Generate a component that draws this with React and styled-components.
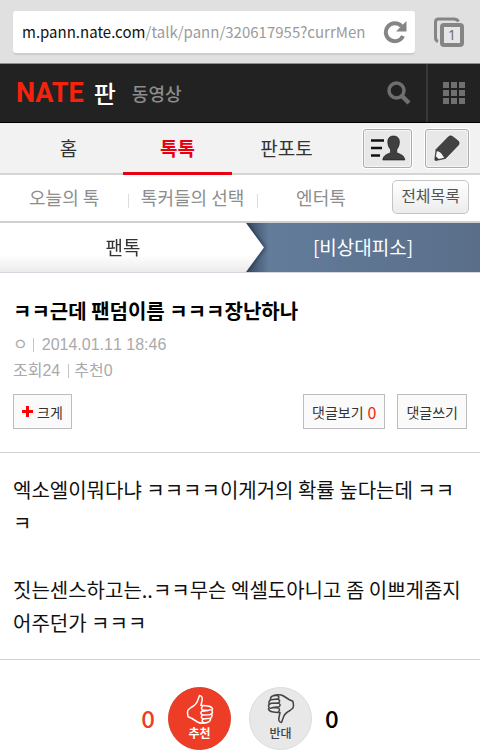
import styled, { createGlobalStyle, css } from "styled-components"

const GlobalStyle = createGlobalStyle`
  * {
    box-sizing: border-box;
  }

  body {
    margin: 0;
    background: #fff;
    color: #111;
    font-family: "Noto Sans CJK KR", sans-serif;
    overflow-x: hidden;
  }

  a {
    color: inherit;
    text-decoration: none;
  }

  button {
    font-family: inherit;
    cursor: pointer;
  }

  svg {
    display: block;
  }
`;

const IconButton = styled.button`
  display: flex;
  flex: none;
  padding: 0;
  border: none;
  background: none;
`;

const BrowserBar = styled.div`
  display: flex;
  align-items: center;
  gap: 19px;
  height: 64px;
  padding: 0 16px 0 13px;
  background: #e0e0e0;
  border-bottom: 1px solid #8c8c8c;
`;

const AddressBox = styled.div`
  display: flex;
  flex: 1;
  align-items: center;
  gap: 8px;
  min-width: 0;
  height: 42px;
  padding: 0 8px 0 9px;
  background: #fff;
  border-radius: 3px;
  box-shadow: 0 2px 1px #cdcdcd;
`;

const Address = styled.label`
  display: grid;
  flex: 1;
  min-width: 0;
  overflow: hidden;
  font-size: 15px;
  line-height: 26px;
  color: #9b9b9b;

  & > * {
    grid-area: 1 / 1;
  }

  span {
    white-space: nowrap;
    pointer-events: none;
  }

  b {
    font-weight: 400;
    color: #111;
  }

  input {
    width: 100%;
    min-width: 0;
    padding: 0;
    border: none;
    outline: none;
    background: transparent;
    font: inherit;
    color: transparent;
    caret-color: #111;
  }
`;

const Header = styled.header`
  display: flex;
  align-items: stretch;
  height: 59px;
  background: #222;
  border-bottom: 1px solid #000;
`;

const Brand = styled.div`
  display: flex;
  flex: 1;
  align-items: center;
  gap: 10px;
  padding-left: 16px;
`;

const Logo = styled.a`
  font-family: Roboto, sans-serif;
  font-size: 27px;
  font-weight: 700;
  color: #f5230c;
`;

const Service = styled.a`
  font-size: 24px;
  font-weight: 500;
  line-height: 30px;
  color: #fff;
`;

const Section = styled.a`
  padding-left: 6px;
  font-size: 18px;
  font-weight: 500;
  color: #8c8c8c;
`;

const HeaderButton = styled(IconButton)`
  align-items: center;
  justify-content: center;
  width: 54px;
  color: #6f6f6f;
  border-left: ${({ $divided }) => ($divided ? "2px solid #383838" : "none")};
`;

const MainNav = styled.nav`
  display: flex;
  align-items: center;
  height: 52px;
  padding: 0 11px 0 14px;
  background: #f2f2f2;
  border-bottom: 2px solid #d5d5d5;
`;

const MainTab = styled.a`
  flex: 1;
  align-self: stretch;
  margin-bottom: -2px;
  border-bottom: 3px solid transparent;
  font-size: 19px;
  line-height: 50px;
  text-align: center;
  color: #333;

  ${({ $active }) => $active && css`
    border-color: #e60012;
    color: #e60012;
    font-weight: 700;
  `}
`;

const Tools = styled.div`
  display: flex;
  gap: 13px;
  padding-left: 22px;
`;

const ToolButton = styled(IconButton)`
  align-items: center;
  justify-content: center;
  width: ${({ $wide }) => ($wide ? "49px" : "44px")};
  height: 39px;
  background: #e8e8e8;
  border: 1px solid #ababab;
  border-radius: 3px;
  box-shadow: inset 0 0 0 1px #f6f6f6, 0 0 0 1px #fff;
`;

const SubNav = styled.nav`
  display: flex;
  align-items: center;
  height: 48px;
  padding-right: 11px;
  border-bottom: 2px solid #d0d0d0;
`;

const SubTab = styled.a`
  flex: 1;
  padding-bottom: 3px;
  font-size: 18px;
  line-height: 26px;
  text-align: center;
  white-space: nowrap;
  color: #8d8d8d;

  & + & {
    background: linear-gradient(#ddd, #ddd) left 10px / 1px 14px no-repeat;
  }
`;

const AllButton = styled.button`
  height: 34px;
  margin: 0 0 3px 7px;
  padding: 0 8px 4px;
  background: linear-gradient(#fff, #ececec);
  border: 1px solid #c4c4c4;
  border-radius: 5px;
  font-size: 16px;
  line-height: 24px;
  color: #555;
`;

const Breadcrumb = styled.nav`
  display: flex;
  height: 50px;
  background: linear-gradient(90deg, #3f5068 52%, #627c9a 56%, #5a6e89);
  border-bottom: 1px solid #d5d8df;
  font-size: 19px;
  line-height: 48px;
  text-align: center;
`;

const Arrow = styled.div`
  flex: 0 0 55%;
  filter: drop-shadow(1px 0 2px #24344b);
  clip-path: inset(0 -12px 0 0);
`;

const Category = styled.a`
  display: block;
  height: 100%;
  padding-right: 18px;
  background: linear-gradient(#fff 65%, #ebebeb);
  clip-path: polygon(0 0, calc(100% - 18px) 0, 100% 50%, calc(100% - 18px) 100%, 0 100%);
  color: #333;
`;

const Board = styled.a`
  flex: 1;
  padding-right: 18px;
  color: #fff;
`;

const PostHead = styled.header`
  padding: 23px 13px;
  border-bottom: 1px solid #d2d2d2;
`;

const Title = styled.h1`
  margin: 0 0 6px;
  font-size: 20px;
  font-weight: 700;
  line-height: 30px;
  color: #000;
`;

const Meta = styled.div`
  display: flex;
  align-items: center;
  gap: 8px;
  height: 26px;
  font-family: "Liberation Sans", "Noto Sans CJK KR", sans-serif;
  font-size: 16px;
  font-kerning: none;
  line-height: 26px;
  color: #aaa;
`;

const Divided = styled.span`
  display: flex;
  align-items: center;
  gap: 5px;

  &::${({ $after }) => ($after ? "after" : "before")} {
    content: "";
    width: 1px;
    height: 14px;
    background: #c4c4c4;
  }
`;

const PostActions = styled.div`
  display: flex;
  gap: 12px;
  margin-top: 10px;
`;

const ActionButton = styled.button`
  display: flex;
  align-items: center;
  gap: 4px;
  height: 35px;
  margin-right: ${({ $first }) => ($first ? "auto" : "0")};
  padding: 0 8px;
  background: #fafafa;
  border: 1px solid #bcbcc2;
  font-size: 14px;
  line-height: 24px;
  color: #333;

  em {
    font-style: normal;
    font-size: 16px;
    color: #f5230c;
  }
`;

const PostBody = styled.article`
  padding: 20px 13px;
  border-bottom: 1px solid #d2d2d2;
  font-size: 20px;
  line-height: 33px;
  word-break: break-all;

  p {
    margin: 0 0 34px;
  }

  p:last-child {
    margin: 0;
  }
`;

const Votes = styled.div`
  display: flex;
  align-items: center;
  justify-content: center;
  gap: 13px;
  padding: 27px 0 5px;
`;

const VoteCount = styled.span`
  padding-bottom: 2px;
  font-size: 24px;
  font-weight: 500;
  line-height: 30px;
  color: ${({ $up }) => ($up ? "#ee3d27" : "#000")};
`;

const VoteButton = styled.button`
  display: flex;
  flex-direction: column;
  align-items: center;
  width: 63px;
  height: 63px;
  margin-left: ${({ $up }) => ($up ? "0" : "5px")};
  padding: 6px 0 0;
  border: 1px solid ${({ $up }) => ($up ? "#d8402e" : "#dcdcdc")};
  border-radius: 50%;
  background: ${({ $up }) => ($up ? "#ee3d27" : "#e8e8e8")};
  color: ${({ $up }) => ($up ? "#fff" : "#444")};
  font-size: 12px;
  font-weight: ${({ $up }) => ($up ? "700" : "500")};
  line-height: 18px;
`;

const ReloadIcon = () => (
  <svg width="24" height="24" viewBox="0 0 24 24" fill="none" stroke="#858585" strokeWidth="4">
    <path d="M18.6 6.3A9 9 0 1 0 20 16" />
    <path d="M23.5 1v10.5H13z" fill="#858585" stroke="none" />
  </svg>
);

const TabsIcon = () => (
  <svg width="30" height="30" viewBox="0 0 30 30" fill="none" stroke="#858585">
    <path d="M4 24.5Q1.5 23.5 1.5 21V5Q1.5 2 4.5 2H20Q23 2 24.5 4.5" strokeWidth="3" />
    <rect x="8" y="8" width="20" height="20" rx="2" strokeWidth="4" fill="#e6e6e6" />
    <text x="18" y="23" fill="#6f6f6f" stroke="none" textAnchor="middle" fontFamily="Noto Sans, sans-serif" fontSize="14">1</text>
  </svg>
);

const SearchIcon = () => (
  <svg width="24" height="24" viewBox="0 0 24 24" fill="none" stroke="currentColor">
    <circle cx="9.5" cy="9.5" r="7.5" strokeWidth="3.5" />
    <path d="M14.5 14.5L22 22" strokeWidth="4.5" />
  </svg>
);

const GridIcon = () => (
  <svg width="22" height="22" viewBox="0 0 22 22" fill="currentColor">
    {[0, 8, 16].map((y) =>
      [0, 8, 16].map((x) => <rect key={`${x}-${y}`} x={x} y={y} width="6" height="6" />)
    )}
  </svg>
);

const ProfileIcon = () => (
  <svg width="36" height="26" viewBox="0 0 36 26" fill="#3f3f3f">
    <path d="M1 5.5h13M1 13h11M1 20.5h9" stroke="#111" strokeWidth="2.5" />
    <path d="M23.500 1c-4 0-5.700 2.400-5.700 5.800 0 3 .9 5.600 2.700 7.700v3.200c-3.200 1.600-7.200 2.300-7.700 7.300h22c-.5-5-4.800-5.700-8-7.300v-3.200c1.700-2.100 2.600-4.700 2.600-7.700 0-3.400-1.900-5.800-5.900-5.800z" stroke="#111" strokeWidth=".6" />
  </svg>
);

const PencilIcon = () => (
  <svg width="26" height="26" viewBox="0 0 26 26">
    <path d="M2 14.500L14.500 1.800Q16.500 0 18.500 1.500L24.300 6Q26 8 24.500 10L11.500 23.500 2 25.500Q.8 25.700.8 24.500z" fill="#424242" stroke="#222" strokeWidth=".6" />
    <path d="M2.700 16.200Q6.500 16.500 8 19.500L10.200 22.700 4.800 24 2 21.500z" fill="#f6f6f6" />
  </svg>
);

const PlusIcon = () => (
  <svg width="11" height="11" viewBox="0 0 11 11">
    <path d="M5.5 0v11M0 5.5h11" stroke="#f00" strokeWidth="3" />
  </svg>
);

const Thumb = ({ down }) => (
  <svg width="28" height="30" viewBox="0 0 28 30" fill="none" stroke="currentColor" strokeWidth="1.5" strokeLinejoin="round" strokeLinecap="round">
    <g transform={down ? "rotate(180 14 15)" : undefined}>
      <path d="M21 28.500Q15 30 11.500 28L6 24.500 2.200 22.800Q1 19 2 16L5 13.500Q10 11 11.500 7L13.500 1.500Q17 2 16 6.500L15 11.500Q19 11.200 23 12.200 26.500 13 26.500 15.500" />
      <path d="M22 16.500L16.500 16Q14.500 14 16.500 12.500M22 16.500Q26 14.500 26.500 18 26.500 20.300 23.500 20.800L16.500 21Q13.500 19 16 17.200L22 16.500" />
      <path d="M25.500 20Q27 22.500 24.500 24.200L17 25Q14 23.200 16.500 21" />
      <path d="M24.500 24.200Q25 27.500 21 28.500L17.500 28.700Q15 27 17 25" />
    </g>
  </svg>
);

const App = () => {
  return (
    <>
      <GlobalStyle />
      <BrowserBar>
        <AddressBox>
          <Address>
            <input type="text" name="address" aria-label="주소" defaultValue="m.pann.nate.com/talk/pann/320617955?currMen" />
            <span aria-hidden="true"><b>m.pann.nate.com</b>/talk/pann/320617955?currMen</span>
          </Address>
          <IconButton type="button" aria-label="새로고침"><ReloadIcon /></IconButton>
        </AddressBox>
        <IconButton type="button" aria-label="탭"><TabsIcon /></IconButton>
      </BrowserBar>

      <Header>
        <Brand>
          <Logo href="#nate">NATE</Logo>
          <Service href="#pann">판</Service>
          <Section href="#video">동영상</Section>
        </Brand>
        <HeaderButton type="button" aria-label="검색"><SearchIcon /></HeaderButton>
        <HeaderButton type="button" aria-label="메뉴" $divided><GridIcon /></HeaderButton>
      </Header>

      <MainNav>
        <MainTab href="#home">홈</MainTab>
        <MainTab href="#talk" $active>톡톡</MainTab>
        <MainTab href="#photo">판포토</MainTab>
        <Tools>
          <ToolButton type="button" aria-label="내 글" $wide><ProfileIcon /></ToolButton>
          <ToolButton type="button" aria-label="글쓰기"><PencilIcon /></ToolButton>
        </Tools>
      </MainNav>

      <SubNav>
        <SubTab href="#today">오늘의 톡</SubTab>
        <SubTab href="#choice">톡커들의 선택</SubTab>
        <SubTab href="#enter">엔터톡</SubTab>
        <AllButton type="button">전체목록</AllButton>
      </SubNav>

      <Breadcrumb>
        <Arrow>
          <Category href="#fan">팬톡</Category>
        </Arrow>
        <Board href="#board">[비상대피소]</Board>
      </Breadcrumb>

      <main>
        <PostHead>
          <Title>ㅋㅋ근데 팬덤이름 ㅋㅋㅋ장난하나</Title>
          <Meta>
            <Divided $after>ㅇ</Divided>
            <span>2014.01.11 18:46</span>
          </Meta>
          <Meta>
            <span>조회24</span>
            <Divided>추천0</Divided>
          </Meta>
          <PostActions>
            <ActionButton type="button" $first><PlusIcon />크게</ActionButton>
            <ActionButton type="button">댓글보기<em>0</em></ActionButton>
            <ActionButton type="button">댓글쓰기</ActionButton>
          </PostActions>
        </PostHead>

        <PostBody>
          <p>엑소엘이뭐다냐 ㅋㅋㅋㅋ이게거의 확률 높다는데 ㅋㅋㅋ</p>
          <p>짓는센스하고는..ㅋㅋ무슨 엑셀도아니고 좀 이쁘게좀지어주던가 ㅋㅋㅋ</p>
        </PostBody>

        <Votes>
          <VoteCount $up>0</VoteCount>
          <VoteButton type="button" $up><Thumb />추천</VoteButton>
          <VoteButton type="button"><Thumb down />반대</VoteButton>
          <VoteCount>0</VoteCount>
        </Votes>
      </main>
    </>
  );
};

export default App
